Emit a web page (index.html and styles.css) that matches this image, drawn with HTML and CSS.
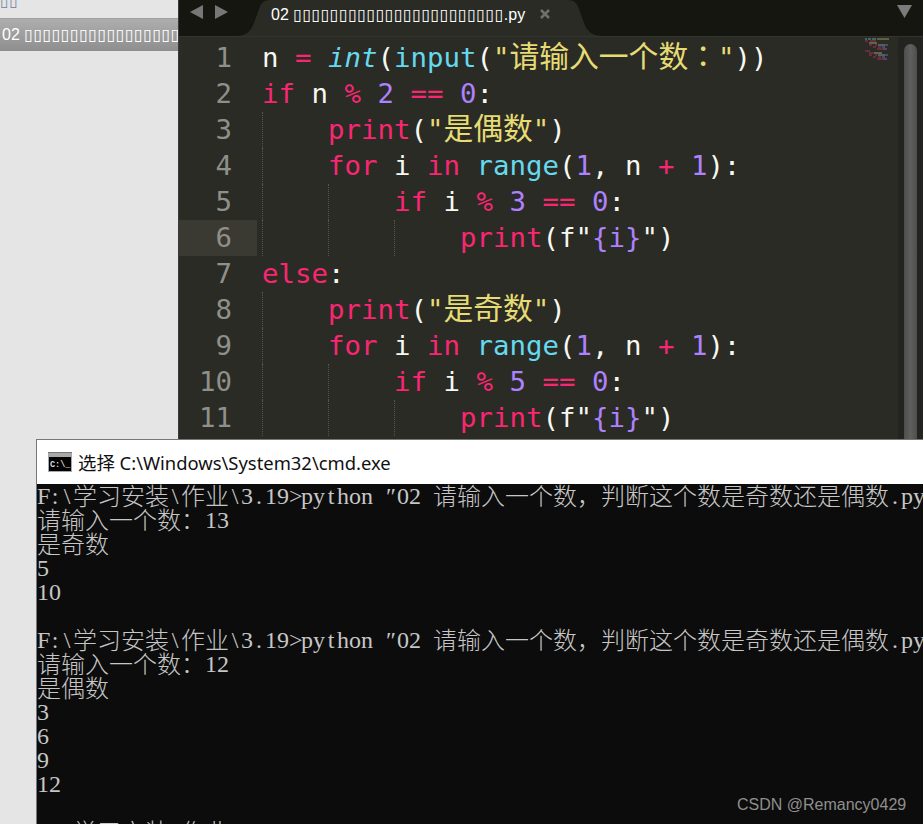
FILE: index.html
```html
<!DOCTYPE html>
<html lang="zh">
<head>
<meta charset="utf-8">
<title>cmd</title>
<link rel="stylesheet" href="styles.css">
</head>
<body>
<div class="desktop">
  <aside class="sidebar">
    <div class="side-top"><span class="tofu">▯▯</span></div>
    <div class="side-row">02 <span class="tofu">▯▯▯▯▯▯▯▯▯▯▯▯▯▯▯▯▯▯▯▯▯▯▯</span></div>
  </aside>
  <main class="editor">
    <header class="tabbar">
      <div class="nav">
        <svg width="40" height="14" viewBox="0 0 40 14"><path d="M13 0v14L0 7z" fill="#777"/><path d="M25 0v14l13-7z" fill="#777"/></svg>
      </div>
      <div class="tab">
        <svg class="tab-bg" width="363" height="36" viewBox="0 0 363 36"><path d="M0 36c9-1 13-5 16-13l5-14C23 3 26 0 32 0h298c6 0 9 3 11 9l5 14c3 8 7 12 17 13z" fill="#2a2b25"/></svg>
        <span class="tab-name">02 <span class="tofu">▯▯▯▯▯▯▯▯▯▯▯▯▯▯▯▯▯▯▯▯▯▯▯</span>.py</span>
        <svg class="tab-close" width="10" height="10" viewBox="0 0 10 10"><path d="M1 1l8 8M9 1l-8 8" stroke="#6f6f6b" stroke-width="2.6" fill="none"/></svg>
      </div>
      <svg class="tab-menu" width="15" height="13" viewBox="0 0 15 13"><path d="M0 0h15L7.5 13z" fill="#7b7b7b"/></svg>
    </header>
    <div class="body">
      <div class="gutter">
        <div class="num">1</div><div class="num">2</div><div class="num">3</div><div class="num">4</div><div class="num">5</div><div class="num cur">6</div><div class="num">7</div><div class="num">8</div><div class="num">9</div><div class="num">10</div><div class="num">11</div>
      </div>
      <div class="code">
<div class="ln"><span class="w">n </span><span class="k">=</span> <span class="b it">int</span><span class="w">(</span><span class="b">input</span><span class="w">(</span><span class="y">"<span class="zh">请输入一个数</span><span class="zh colon" lang="zh-Hant">：</span>"</span><span class="w">))</span></div>
<div class="ln"><span class="k">if</span><span class="w"> n </span><span class="k">%</span> <span class="p">2</span> <span class="k">==</span> <span class="p">0</span><span class="w">:</span></div>
<div class="ln"><span class="sp"></span><span class="k">print</span><span class="w">(</span><span class="y">"<span class="zh">是偶数</span>"</span><span class="w">)</span></div>
<div class="ln"><span class="sp"></span><span class="k">for</span><span class="w"> i </span><span class="k">in</span> <span class="b">range</span><span class="w">(</span><span class="p">1</span><span class="w">, n </span><span class="k">+</span> <span class="p">1</span><span class="w">):</span></div>
<div class="ln"><span class="sp"></span><span class="sp"></span><span class="k">if</span><span class="w"> i </span><span class="k">%</span> <span class="p">3</span> <span class="k">==</span> <span class="p">0</span><span class="w">:</span></div>
<div class="ln"><span class="sp"></span><span class="sp"></span><span class="sp"></span><span class="k">print</span><span class="w">(f"</span><span class="p">{i}</span><span class="w">")</span></div>
<div class="ln"><span class="k">else</span><span class="w">:</span></div>
<div class="ln"><span class="sp"></span><span class="k">print</span><span class="w">(</span><span class="y">"<span class="zh">是奇数</span>"</span><span class="w">)</span></div>
<div class="ln"><span class="sp"></span><span class="k">for</span><span class="w"> i </span><span class="k">in</span> <span class="b">range</span><span class="w">(</span><span class="p">1</span><span class="w">, n </span><span class="k">+</span> <span class="p">1</span><span class="w">):</span></div>
<div class="ln"><span class="sp"></span><span class="sp"></span><span class="k">if</span><span class="w"> i </span><span class="k">%</span> <span class="p">5</span> <span class="k">==</span> <span class="p">0</span><span class="w">:</span></div>
<div class="ln"><span class="sp"></span><span class="sp"></span><span class="sp"></span><span class="k">print</span><span class="w">(f"</span><span class="p">{i}</span><span class="w">")</span></div>
      </div>
      <svg class="minimap" width="28" height="24" viewBox="0 0 28 24">
        <path d="M1 1h2M4 1h3M8 1h4" stroke="#5f9fae" stroke-width="1"/><path d="M13 1h12" stroke="#9a9560" stroke-width="1"/>
        <path d="M1 3h3M6 3h6" stroke="#a0305a" stroke-width="1"/><path d="M5 5h8" stroke="#9f9a60" stroke-width="1"/>
        <path d="M5 7h3M11 7h2" stroke="#a0305a" stroke-width="1"/><path d="M14 7h7" stroke="#5f9fae" stroke-width="1"/><path d="M21 7h3" stroke="#7a66a8" stroke-width="1"/>
        <path d="M9 9h3M14 9h3" stroke="#a0305a" stroke-width="1"/><path d="M18 9h3" stroke="#7a66a8" stroke-width="1"/>
        <path d="M13 11h6" stroke="#a0305a" stroke-width="1"/><path d="M19 11h4" stroke="#7a66a8" stroke-width="1"/>
        <path d="M1 13h5" stroke="#a0305a" stroke-width="1"/>
        <path d="M5 15h5" stroke="#a0305a" stroke-width="1"/><path d="M10 15h8" stroke="#9f9a60" stroke-width="1"/>
        <path d="M5 17h3M11 17h2" stroke="#a0305a" stroke-width="1"/><path d="M14 17h7" stroke="#5f9fae" stroke-width="1"/><path d="M21 17h3" stroke="#7a66a8" stroke-width="1"/>
        <path d="M9 19h3M14 19h3" stroke="#a0305a" stroke-width="1"/><path d="M18 19h3" stroke="#7a66a8" stroke-width="1"/>
        <path d="M13 21h6" stroke="#a0305a" stroke-width="1"/><path d="M19 21h4" stroke="#7a66a8" stroke-width="1"/>
      </svg>
      <div class="scrollbar"><div class="thumb"></div></div>
    </div>
  </main>
  <section class="cmd">
    <div class="cmd-title">
      <svg width="24" height="20" viewBox="0 0 24 20"><rect width="24" height="20" fill="#a8a8a8"/><rect y="0" width="24" height="1" fill="#777"/><rect x="1" y="5" width="22" height="14" fill="#000"/><text x="2" y="15" class="ico-text">C:\_</text></svg>
      <span><span class="title-zh">选择</span> C:\Windows\System32\cmd.exe</span>
    </div>
    <div class="console">
<div class="t"><i class="m">F</i><i class="m">:</i><i class="m">\</i><span class="c">学习安装</span><i class="m">\</i><span class="c">作业</span><i class="m">\</i>3<i class="m">.</i>19<i class="m">&gt;</i>py<i class="m">t</i>hon <i class="m">″</i>02 <span class="c">请输入一个数，判断这个数是奇数还是偶数</span><i class="m">.</i>py</div>
<div class="t"><span class="c">请输入一个数：</span>13</div>
<div class="t"><span class="c">是奇数</span></div>
<div class="t">5</div>
<div class="t">10</div>
<div class="t">&nbsp;</div>
<div class="t"><i class="m">F</i><i class="m">:</i><i class="m">\</i><span class="c">学习安装</span><i class="m">\</i><span class="c">作业</span><i class="m">\</i>3<i class="m">.</i>19<i class="m">&gt;</i>py<i class="m">t</i>hon <i class="m">″</i>02 <span class="c">请输入一个数，判断这个数是奇数还是偶数</span><i class="m">.</i>py</div>
<div class="t"><span class="c">请输入一个数：</span>12</div>
<div class="t"><span class="c">是偶数</span></div>
<div class="t">3</div>
<div class="t">6</div>
<div class="t">9</div>
<div class="t">12</div>
<div class="t">&nbsp;</div>
<div class="t"><i class="m">F</i><i class="m">:</i><i class="m">\</i><span class="c">学习安装</span><i class="m">\</i><span class="c">作业</span><i class="m">\</i>3<i class="m">.</i>19<i class="m">&gt;</i></div>
    </div>
  </section>
  <div class="mark">CSDN @Remancy0429</div>
</div>
</body>
</html>
```
FILE: styles.css
```css
* { box-sizing: border-box; }
html, body { margin: 0; padding: 0; background: #e5e5e5; }
.desktop { position: relative; display: flex; width: 923px; height: 824px; overflow: hidden; }
.sidebar { width: 178px; flex: none; background: #e5e5e5; font-family: "Liberation Sans", sans-serif; font-size: 16px; color: #fff; overflow: hidden; }
.tofu { font-family: "DejaVu Sans", sans-serif; font-size: 16px; line-height: 0; letter-spacing: 0.35px; }
.side-top { height: 18px; color: #7a8ea8; line-height: 2px; white-space: nowrap; overflow: hidden; }
.side-row { height: 33px; line-height: 31px; padding-left: 2px; white-space: nowrap; overflow: hidden; background: linear-gradient(#aeaeae, #8e8e8e); border-top: 1px solid #a0a0a0; }
.editor { flex: 1; min-width: 0; background: #2a2b25; border-left: 1px solid #3a3a38; display: flex; flex-direction: column; }
.tabbar { position: relative; height: 37px; flex: none; background: #161611; display: flex; align-items: flex-start; border-bottom: 1px solid #33342e; }
.nav { width: 59px; padding: 5px 0 0 11px; flex: none; }
.nav svg { display: block; }
.tab { position: relative; width: 363px; height: 36px; flex: none; font-family: "Liberation Sans", sans-serif; font-size: 16px; color: #fff; white-space: nowrap; }
.tab-bg { position: absolute; left: 0; top: 0; }
.tab-name { position: relative; display: inline-block; margin-left: 33px; line-height: 29px; }
.tab-close { position: absolute; left: 302px; top: 9px; }
.tab-menu { position: absolute; right: 11px; top: 5px; }
.body { position: relative; flex: 1; display: flex; padding-top: 3px; min-height: 0; font-family: "DejaVu Sans Mono", "Noto Sans CJK SC", monospace; font-size: 27.4px; }
.gutter { width: 78px; flex: none; color: #8f908a; text-align: right; }
.num { height: 36px; line-height: 36px; padding-right: 25px; }
.num.cur { background: #3a3a32; }
.code { flex: 1; padding-left: 5px; min-width: 0; }
.ln { height: 36px; line-height: 36px; white-space: pre; }
.sp { display: inline-block; width: 66px; height: 36px; vertical-align: top; border-left: 1px dotted #55564f; }
.w { color: #f8f8f2; }
.k { color: #f92672; }
.b { color: #66d9ef; }
.it { font-style: italic; }
.y { color: #e6db74; }
.p { color: #ae81ff; }
.zh { font-family: "Noto Sans CJK SC", sans-serif; font-size: 29.8px; line-height: 0; }
.colon { font-family: "Noto Sans CJK TC", sans-serif; }
.minimap { position: absolute; left: 685px; top: 1px; }
.scrollbar { position: absolute; right: 0; top: 0; bottom: 0; width: 25px; background: #232420; padding: 7px 6px 0 6px; }
.thumb { height: 100%; border-radius: 7px 7px 0 0; background: linear-gradient(90deg, #4e4e4c, #5f5f5d 50%, #4e4e4c); }
.cmd { position: absolute; left: 36px; top: 439px; width: 900px; height: 400px; border-left: 1px solid #777; border-top: 1px solid #777; background: #0c0c0c; }
.cmd-title { height: 44px; background: #fff; display: flex; align-items: center; gap: 6px; padding-left: 11px; font-family: "Noto Sans", "Noto Sans CJK SC", sans-serif; font-size: 18.4px; color: #111; white-space: nowrap; }
.title-zh { font-family: "Noto Sans CJK SC", sans-serif; }
.ico-text { font-family: "Liberation Mono", monospace; font-size: 8.5px; font-weight: 700; fill: #ddd; }
.console { font-family: "Liberation Serif", serif; font-size: 24px; color: #c6c6c6; word-spacing: 6px; }
.t { height: 24px; line-height: 24px; white-space: pre; }
.m { display: inline-block; width: 12px; text-align: center; font-style: normal; line-height: 24px; }
.c { font-family: "Noto Sans CJK SC", sans-serif; font-weight: 300; word-spacing: 0; line-height: 0; vertical-align: -1px; }
.mark { position: absolute; left: 737px; top: 796px; font-family: "Liberation Sans", sans-serif; font-size: 16px; color: #8f8f8f; }
```
